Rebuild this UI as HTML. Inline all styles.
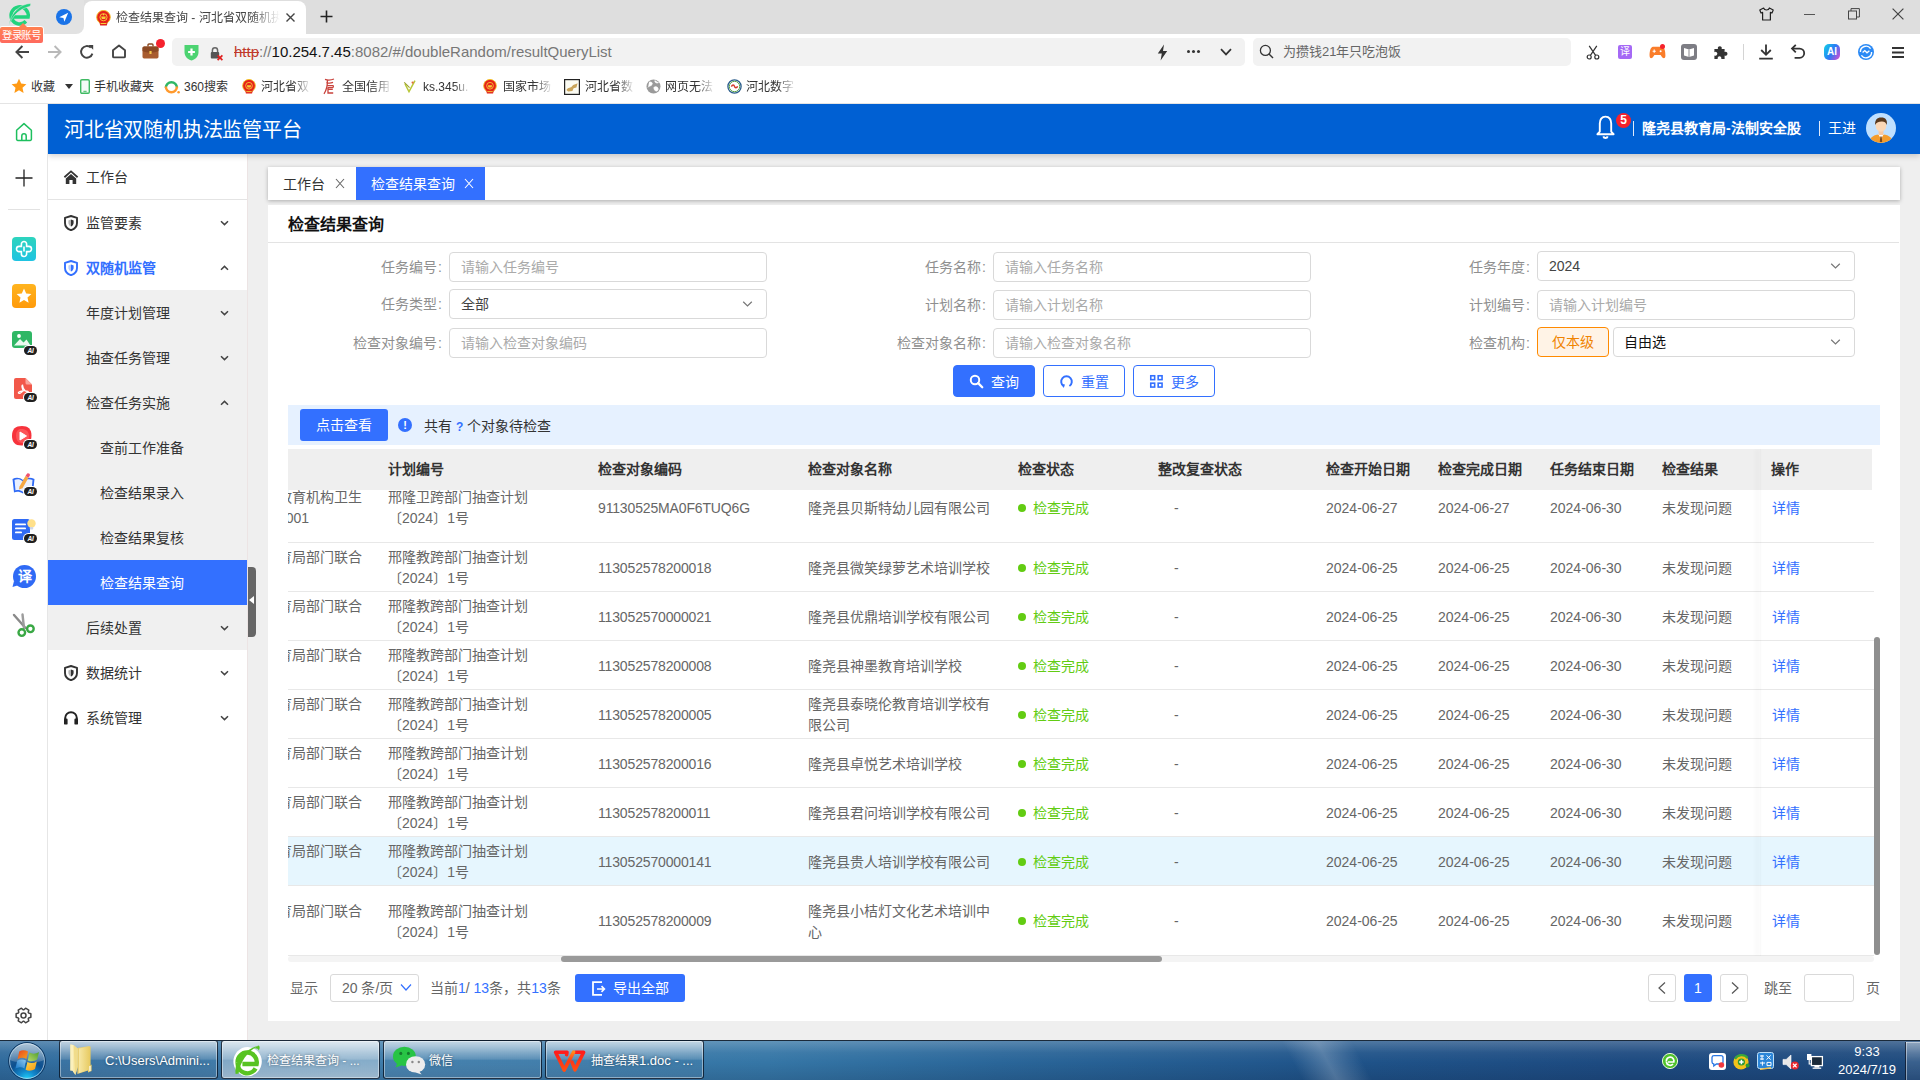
<!DOCTYPE html>
<html lang="zh-CN">
<head>
<meta charset="utf-8">
<title>检查结果查询</title>
<style>
*{box-sizing:border-box;margin:0;padding:0}
html,body{width:1920px;height:1080px;overflow:hidden;background:#fff}
body{font-family:"Liberation Sans",sans-serif;font-size:14px;color:#333;position:relative}
.abs{position:absolute}
svg{display:block}
/* ---------- browser chrome ---------- */
#tabbar{position:absolute;left:0;top:0;width:1920px;height:34px;background:#dedede}
#tabbar .pinned{position:absolute;left:0;top:0;width:84px;height:34px;background:#e2e2e2;border-bottom-right-radius:8px}
#tabbar .active{position:absolute;left:84px;top:1px;width:222px;height:33px;background:#fff;border-radius:8px 8px 0 0}
#tabbar .ttl{position:absolute;left:32px;top:8px;width:164px;height:18px;line-height:18px;font-size:12px;color:#444;white-space:nowrap;overflow:hidden;-webkit-mask-image:linear-gradient(90deg,#000 82%,transparent 100%)}
#login{position:absolute;left:-1px;top:26px;width:45px;height:18px;background:linear-gradient(180deg,#ff8150,#ff6a5e);border:1px solid #fff;border-radius:3px;color:#fff;font-size:10.5px;line-height:16px;text-align:center;z-index:5;letter-spacing:-0.3px;white-space:nowrap}
#login:before{content:"";position:absolute;left:19px;top:-4px;border:4px solid transparent;border-top:none;border-bottom:4px solid #ff8150}
#navbar{position:absolute;left:0;top:34px;width:1920px;height:35px;background:#fff}
#addr{position:absolute;left:172px;top:4px;width:1073px;height:28px;background:#f2f2f2;border-radius:5px}
#url{position:absolute;left:62px;top:4px;font-size:15px;line-height:20px;color:#777;white-space:nowrap}
#search{position:absolute;left:1253px;top:4px;width:318px;height:28px;background:#f2f2f2;border-radius:5px}
#search span{position:absolute;left:30px;top:5px;font-size:13px;line-height:18px;color:#666;white-space:nowrap}
#bm{position:absolute;left:0;top:69px;width:1920px;height:35px;background:#fff;border-bottom:1px solid #e4e4e4}
#bm .t{position:absolute;top:10px;font-size:12px;line-height:17px;color:#333;white-space:nowrap;overflow:hidden;height:17px}
#bm .f{-webkit-mask-image:linear-gradient(90deg,#000 66%,rgba(0,0,0,.12) 100%)}
#bm .i{position:absolute}
/* ---------- app frame ---------- */
#rail{position:absolute;left:0;top:104px;width:48px;height:936px;background:#fff;border-right:1px solid #e6e6e6}
#header{position:absolute;left:48px;top:104px;width:1872px;height:50px;background:#0060d3;z-index:3;box-shadow:0 2px 6px rgba(0,0,0,.18);clip-path:inset(0 0 -12px 0)}
#header h1{position:absolute;left:16px;top:12px;font-size:20px;line-height:28px;font-weight:normal;color:#fff;letter-spacing:-0.2px;white-space:nowrap}
#side{position:absolute;left:48px;top:154px;width:200px;height:886px;background:#fff;border-right:1px solid #ece4e4}
#content{position:absolute;left:248px;top:154px;width:1672px;height:886px;background:#efefef}
#taskbar{position:absolute;left:0;top:1040px;width:1920px;height:40px;background:linear-gradient(90deg,#2f6a9c 0%,#3f7dab 18%,#3576a6 40%,#2a6699 52%,#1f5389 70%,#1d4a80 85%,#1f4b7e 100%);border-top:1px solid #1b2a3a}

/* ---------- sidebar ---------- */
#side .it{position:absolute;left:0;width:199px;height:45px;line-height:47px;font-size:14px;color:#333;white-space:nowrap}
#side .it .ic{position:absolute;left:15px;top:15px;width:16px;height:16px}
#side .it .tx{position:absolute;left:38px;top:0}
#side .it .tx3{position:absolute;left:52px;top:0}
#side .it .cv{position:absolute;left:171px;top:19px;width:11px;height:8px}
#side .sub{position:absolute;left:0;top:136px;width:199px;height:360px;background:#f0f0f0}
#side .on{background:#3370ff;color:#fff !important}
#handle{position:absolute;left:248px;top:567px;width:8px;height:70px;background:#666;border-radius:0 4px 4px 0;z-index:4}
#handle:after{content:"";position:absolute;left:1px;top:29px;border:4px solid transparent;border-left:none;border-right:5px solid #fff}
/* ---------- rail ---------- */
#rail .ri{position:absolute;left:12px;width:24px;height:24px}
#rail .ai{position:absolute;width:13px;height:9px;border-radius:5px;background:#1f1f1f;color:#fff;font-size:6.5px;line-height:9px;text-align:center;font-weight:bold;font-style:italic;letter-spacing:-0.2px;box-shadow:0 0 0 1px #fff}

/* ---------- content ---------- */
#tabs{position:absolute;left:20px;top:13px;width:1632px;height:33px;background:#fff;box-shadow:0 1px 4px rgba(0,0,0,.28)}
#tabs .tb{position:absolute;top:0;height:33px;line-height:34px;font-size:14px;color:#333;white-space:nowrap}
#tabs .x{position:absolute;top:11px;width:10px;height:11px}
#main{position:absolute;left:20px;top:51px;width:1632px;height:816px;background:#fff}
#main h2{position:absolute;left:20px;top:9px;font-size:16px;line-height:22px;font-weight:bold;color:#111;white-space:nowrap}
#main .hr{position:absolute;left:0;top:37px;width:1631px;height:1px;background:#e3e3e3}
.lb{position:absolute;width:161px;letter-spacing:0;text-align:right;font-size:14px;line-height:30px;height:30px;color:#8f8f8f;white-space:nowrap}
.lb i{font-style:normal;margin-left:1.5px}
.in{position:absolute;width:318px;height:30px;border:1px solid #d9d9d9;border-radius:4px;background:#fff;font-size:14px;line-height:28px;padding-left:11px;color:#aaa;white-space:nowrap}
.in.v{color:#444}
.in svg{position:absolute;right:13px;top:10px}
.btn{position:absolute;top:160px;width:82px;height:32px;border-radius:4px;border:1px solid #3370ff;font-size:14px;line-height:33px;color:#3370ff;white-space:nowrap;background:#fff}
.btn.p{background:#3370ff;color:#fff}
.btn span{position:absolute;left:37px;top:0}
.btn svg{position:absolute;left:15px;top:8px;width:15px;height:15px}
#info{position:absolute;left:20px;top:200px;width:1592px;height:40px;background:#e6f1ff}
#info .b{position:absolute;left:12px;top:4px;width:88px;height:32px;border-radius:3px;background:#3370ff;color:#fff;font-size:14px;line-height:33px;text-align:center}
#info .d{position:absolute;left:110px;top:13px;width:14px;height:14px;border-radius:50%;background:#3370ff;color:#fff;font-size:11px;font-weight:bold;line-height:14px;text-align:center}
#info .m{position:absolute;left:136px;top:0;line-height:42px;font-size:14px;color:#333;white-space:nowrap}

/* ---------- table ---------- */
#tbl{position:absolute;left:20px;top:244px;width:1592px;height:515px;overflow:hidden}
#thead{position:absolute;left:0;top:0;width:1584px;height:41px;background:#efefef}
#thead div{position:absolute;top:0;line-height:41px;font-size:14px;font-weight:bold;color:#333;white-space:nowrap}
.tr{position:absolute;left:0;width:1586px;border-bottom:1px solid #e8e8e8;background:#fff}
.tr.hl{background:#e6f6fe}
.tr div{position:absolute;font-size:14px;line-height:21px;color:#666;white-space:nowrap;margin-top:1px}
.tr .st{color:#62cc12}
.tr .st:before{content:"";position:absolute;left:-15px;top:6px;width:8px;height:8px;border-radius:50%;background:#62cc12}
.tr .lk{color:#3370ff}
.fx{position:absolute;left:1472px;top:0;width:1px;height:507px;box-shadow:-3px 0 5px rgba(0,0,0,.12);background:rgba(0,0,0,.02)}
#vsb{position:absolute;left:1586px;top:41px;width:6px;height:470px}
#vsb i{position:absolute;left:0;top:147px;width:6px;height:318px;border-radius:3px;background:#8f8f8f}
#hsb{position:absolute;left:0;top:507px;width:1586px;height:6px;background:#f4f4f4;border-radius:3px}
#hsb i{position:absolute;left:273px;top:0;width:601px;height:6px;border-radius:3px;background:#9a9a9a}
/* ---------- pager ---------- */
#pg{position:absolute;left:0;top:769px;width:1631px;height:28px;font-size:14px;color:#666}
#pg .t{position:absolute;top:0;line-height:28px;white-space:nowrap}
#pg .bx{position:absolute;top:0;height:28px;border:1px solid #d9d9d9;border-radius:3px;background:#fff}
#pg b{font-weight:normal;color:#3370ff}

/* ---------- taskbar ---------- */
#taskbar .tbn{position:absolute;top:-1px;height:39px;border:1px solid rgba(8,22,40,.85);border-radius:3px;background:linear-gradient(180deg,rgba(255,255,255,.62) 0%,rgba(255,255,255,.34) 30%,rgba(255,255,255,.16) 49%,rgba(255,255,255,.04) 52%,rgba(255,255,255,.07) 100%);box-shadow:inset 0 0 0 1px rgba(255,255,255,.42)}
#taskbar .tbn.act{background:linear-gradient(180deg,rgba(255,255,255,.78) 0%,rgba(255,255,255,.58) 30%,rgba(255,255,255,.46) 49%,rgba(255,255,255,.36) 52%,rgba(255,255,255,.5) 100%)}
#taskbar .tbn span{position:absolute;top:11px;left:45px;font-size:12px;line-height:18px;color:#fff;white-space:nowrap;text-shadow:0 0 3px rgba(0,0,0,.45)}
#taskbar .ck{position:absolute;left:1822px;top:2px;width:90px;text-align:center;color:#fff;font-size:13px;line-height:18px;white-space:nowrap}
</style>
</head>
<body>
<!-- ======= BROWSER TAB BAR ======= -->
<div id="tabbar">
  <div class="abs" style="left:74px;top:24px;width:10px;height:10px;background:#fff"></div><div class="pinned"></div>
<!-- 360 logo -->
<svg class="abs" style="left:7px;top:2px" width="28" height="28" viewBox="0 0 28 28"><path d="M4.6 15 H21.1 A8.6 8.6 0 1 0 18.9 19.3" fill="none" stroke="#22d47e" stroke-width="3.5"/><path d="M23.6 1.4 C13.6 2.2 4 9.6 1.8 23.4 C5.6 13.2 13 6.6 22.4 4.6 C23.4 3.8 23.8 2.6 23.6 1.4 Z" fill="#22d47e" stroke="#e2e2e2" stroke-width=".5"/></svg>
<!-- blue plane -->
<svg class="abs" style="left:56px;top:9px" width="16" height="16" viewBox="0 0 16 16"><circle cx="8" cy="8" r="8" fill="#1a73e8"/><path d="M3.2 8.2 L12.2 3.8 L8.4 12.8 L7.4 9 Z" fill="#fff"/></svg>

  <div class="active">
<svg class="abs" style="left:12px;top:9px" width="15" height="16" viewBox="0 0 15 16"><circle cx="7.5" cy="7.2" r="6.8" fill="#e6211a" stroke="#f3c21c" stroke-width=".9"/><circle cx="7.5" cy="7.2" r="3.6" fill="none" stroke="#f7d038" stroke-width=".9"/><path d="M5.2 6.6 H9.8 L9.2 9 H5.8 Z" fill="#f7d038"/><circle cx="7.5" cy="4.6" r=".8" fill="#f7d038"/><path d="M3.4 12.2 H11.6 L10.8 15.4 H4.2 Z" fill="#e0241c"/><rect x="4.6" y="13" width="5.8" height="1" fill="#f7d038"/></svg>
<svg class="abs" style="left:201px;top:11px" width="11" height="11" viewBox="0 0 11 11"><path d="M1.5 1.5 L9.5 9.5 M9.5 1.5 L1.5 9.5" stroke="#444" stroke-width="1.4" fill="none"/></svg>
<div class="ttl">检查结果查询 - 河北省双随机执法</div></div>
</div>

<svg class="abs" style="z-index:2;left:320px;top:10px" width="13" height="13" viewBox="0 0 13 13"><path d="M6.5 0.5 V12.5 M0.5 6.5 H12.5" stroke="#222" stroke-width="1.6" fill="none"/></svg>
<svg class="abs" style="z-index:2;left:1759px;top:7px" width="15" height="14" viewBox="0 0 15 14"><path d="M4.6 1 L0.8 3 L2 6 L3.6 5.4 V13 H11.4 V5.4 L13 6 L14.2 3 L10.4 1 C10 2.4 9 3 7.5 3 C6 3 5 2.4 4.6 1 Z" fill="none" stroke="#222" stroke-width="1.2" stroke-linejoin="round"/></svg>
<div class="abs" style="z-index:2;left:1804px;top:14px;width:11px;height:1px;background:#555"></div>
<svg class="abs" style="z-index:2;left:1848px;top:8px" width="12" height="12" viewBox="0 0 12 12"><rect x="0.5" y="3" width="8" height="8" fill="none" stroke="#444" stroke-width="1"/><path d="M3 3 V0.6 H11.4 V9 H8.6" fill="none" stroke="#444" stroke-width="1"/></svg>
<svg class="abs" style="z-index:2;left:1892px;top:8px" width="12" height="12" viewBox="0 0 12 12"><path d="M0.6 0.6 L11.4 11.4 M11.4 0.6 L0.6 11.4" stroke="#444" stroke-width="1.2" fill="none"/></svg>
<div id="login">登录账号</div>
<!-- ======= NAV BAR ======= -->
<div id="navbar">
<svg class="abs" style="left:15px;top:11px" width="15" height="14" viewBox="0 0 15 14"><path d="M14 7 H2 M7.4 1 L1.4 7 L7.4 13" fill="none" stroke="#444" stroke-width="1.9"/></svg>
<svg class="abs" style="left:47px;top:11px" width="15" height="14" viewBox="0 0 15 14"><path d="M1 7 H13 M7.6 1 L13.6 7 L7.6 13" fill="none" stroke="#b9b9b9" stroke-width="1.9"/></svg>
<svg class="abs" style="left:79px;top:10px" width="16" height="16" viewBox="0 0 16 16"><path d="M13.4 9.6 A5.8 5.8 0 1 1 11.8 3.6" fill="none" stroke="#444" stroke-width="1.9"/><path d="M9.4 1 H14.2 V5.8 Z" fill="#444"/></svg>
<svg class="abs" style="left:111px;top:10px" width="16" height="15" viewBox="0 0 16 15"><path d="M2 6.2 L8 1.4 L14 6.2 V12.4 A1 1 0 0 1 13 13.4 H3 A1 1 0 0 1 2 12.4 Z" fill="none" stroke="#444" stroke-width="1.9" stroke-linejoin="round"/></svg>
<svg class="abs" style="left:142px;top:9px" width="17" height="16" viewBox="0 0 17 16"><path d="M6 3.6 V2 A1 1 0 0 1 7 1 H10 A1 1 0 0 1 11 2 V3.6" fill="none" stroke="#8a4a23" stroke-width="1.4"/><rect x="0.5" y="3.4" width="16" height="12" rx="1.6" fill="#a85c2f"/><path d="M0.5 5 A1.6 1.6 0 0 1 2.1 3.4 H14.9 A1.6 1.6 0 0 1 16.5 5 V8 C12 10 5 10 0.5 8 Z" fill="#8c4a24"/><rect x="7.4" y="8" width="2.2" height="3" rx=".4" fill="#f4c84a"/></svg>
<div class="abs" style="left:156px;top:5px;width:9px;height:9px;border-radius:50%;background:#f5222d"></div>

<svg class="abs" style="left:1586px;top:11px" width="14" height="15" viewBox="0 0 14 15"><path d="M3.2 0.8 L9.6 10.4 M10.8 0.8 L4.4 10.4" stroke="#333" stroke-width="1.2" fill="none"/><circle cx="3.2" cy="12" r="2" fill="none" stroke="#333" stroke-width="1.2"/><circle cx="10.8" cy="12" r="2" fill="none" stroke="#333" stroke-width="1.2"/></svg>
<div class="abs" style="left:1618px;top:11px;width:14px;height:14px;border-radius:2px;background:#a569f5;color:#fff;font-size:10px;line-height:14px;text-align:center">译</div>
<svg class="abs" style="left:1649px;top:12px" width="17" height="13" viewBox="0 0 17 13"><path d="M4 0.8 H13 C15.4 0.8 16.6 6 16.4 10 C16.2 13 14 12.8 12.6 10.6 L11.6 9 H5.4 L4.4 10.6 C3 12.8 0.8 13 0.6 10 C0.4 6 1.6 0.8 4 0.8 Z" fill="#fa7d2a"/><path d="M5.2 3.6 V6.8 M3.6 5.2 H6.8" stroke="#fff" stroke-width="1.1"/><circle cx="11.6" cy="5.2" r="1" fill="#fff"/></svg>
<div class="abs" style="left:1660px;top:10px;width:5px;height:5px;border-radius:50%;background:#f5222d"></div>
<svg class="abs" style="left:1681px;top:10px" width="16" height="16" viewBox="0 0 16 16"><rect width="16" height="16" rx="3" fill="#7d7d84"/><path d="M3 4 L8 5.6 L13 4 V11.4 L8 13 L3 11.4 Z" fill="#fff"/><path d="M8 5.6 V13" stroke="#7d7d84" stroke-width=".9"/></svg>
<svg class="abs" style="left:1713px;top:10px" width="16" height="16" viewBox="0 0 16 16"><path d="M1.4 5 H5 A2 2 0 1 1 8.6 5 H11.6 V8 A2 2 0 1 1 11.6 11.6 V15 H8.2 A1.9 1.9 0 1 0 4.8 15 H1.4 V11.4 A1.9 1.9 0 1 0 1.4 8.2 Z" fill="#333"/></svg>
<div class="abs" style="left:1743px;top:10px;width:1px;height:16px;background:#d4d4d4"></div>
<svg class="abs" style="left:1758px;top:10px" width="16" height="16" viewBox="0 0 16 16"><path d="M8 0.6 V10.4 M3.2 6 L8 10.8 L12.8 6 M1.2 14.6 H14.8" fill="none" stroke="#333" stroke-width="1.8"/></svg>
<svg class="abs" style="left:1790px;top:10px" width="16" height="16" viewBox="0 0 16 16"><path d="M2.4 4.6 H9.6 A4.6 4.6 0 0 1 9.6 13.8 H4.6" fill="none" stroke="#333" stroke-width="1.8"/><path d="M5.8 0.8 L2 4.6 L5.8 8.4" fill="none" stroke="#333" stroke-width="1.8"/></svg>
<div class="abs" style="left:1824px;top:10px;width:16px;height:16px;border-radius:5px;background:linear-gradient(120deg,#12d6e6 0%,#2a7af5 50%,#e34ad0 100%);color:#fff;font-size:10px;font-weight:bold;line-height:16px;text-align:center">AI</div>
<svg class="abs" style="left:1858px;top:10px" width="16" height="16" viewBox="0 0 16 16"><circle cx="8" cy="8" r="8" fill="#2b8af5"/><path d="M2.4 8 A5.6 5.6 0 0 1 12.6 4.6" fill="none" stroke="#fff" stroke-width="1.4"/><path d="M13.6 8 A5.6 5.6 0 0 1 3.4 11.4" fill="none" stroke="#fff" stroke-width="1.4"/><path d="M4.6 8.6 L6.8 6.6 L9 8.8 L11.4 6.8" fill="none" stroke="#fff" stroke-width="1.3"/></svg>
<div class="abs" style="left:1892px;top:13px;width:12px;height:2px;background:#333;box-shadow:0 4.5px 0 #333,0 9px 0 #333"></div>

  <div id="addr">
<svg class="abs" style="left:12px;top:6px" width="15" height="17" viewBox="0 0 15 17"><path d="M0.5 1 H14.5 V8 C14.5 12.4 11.6 15.2 7.5 16.6 C3.4 15.2 0.5 12.4 0.5 8 Z" fill="#4cd371"/><path d="M7.5 4.6 V11.4 M4.1 8 H10.9" stroke="#fff" stroke-width="2.2"/></svg>
<svg class="abs" style="left:38px;top:8px" width="14" height="15" viewBox="0 0 14 15"><path d="M2.4 6.4 V4.4 A2.6 2.6 0 0 1 7.6 4.4 V6.4" fill="none" stroke="#666" stroke-width="1.5"/><rect x="0.8" y="6" width="8.4" height="6.6" rx="1" fill="#555"/><path d="M7.6 9.4 L12.4 14.2 M12.4 9.4 L7.6 14.2" stroke="#e02020" stroke-width="1.7"/></svg>
<svg class="abs" style="left:985px;top:6px" width="11" height="17" viewBox="0 0 11 17"><path d="M7 0.5 L0.8 9.6 H4.8 L3.6 16.5 L10.2 7 H6 Z" fill="#333"/></svg>
<div class="abs" style="left:1015px;top:12px;width:3px;height:3px;border-radius:50%;background:#333;box-shadow:5px 0 0 #333,10px 0 0 #333"></div>
<svg class="abs" style="left:1048px;top:10px" width="12" height="8" viewBox="0 0 12 8"><path d="M1 1.2 L6 6.4 L11 1.2" fill="none" stroke="#333" stroke-width="1.7"/></svg>
<div id="url"><span style="color:#c0392b;text-decoration:line-through">http</span>://<span style="color:#111">10.254.7.45</span>:8082/#/doubleRandom/resultQueryList</div></div>
  <div id="search"><svg class="abs" style="left:6px;top:6px" width="15" height="15" viewBox="0 0 15 15"><circle cx="6.4" cy="6.4" r="5" fill="none" stroke="#333" stroke-width="1.3"/><path d="M10 10 L14 14" stroke="#333" stroke-width="1.5"/></svg><span>为攒钱21年只吃泡饭</span></div>
</div>
<!-- ======= BOOKMARK BAR ======= -->
<div id="bm">
<svg class="i" style="left:11px;top:9px" width="16" height="16" viewBox="0 0 16 16"><path d="M8 0.8 L10.2 5.6 L15.4 6.2 L11.5 9.7 L12.6 14.9 L8 12.3 L3.4 14.9 L4.5 9.7 L0.6 6.2 L5.8 5.6 Z" fill="#ff9a16"/></svg>
<div class="t" style="left:31px">收藏</div>
<div class="i" style="left:65px;top:15px;border:4px solid transparent;border-top:5px solid #333;border-bottom:none"></div>
<svg class="i" style="left:80px;top:10px" width="10" height="15" viewBox="0 0 10 15"><rect x="0.7" y="0.7" width="8.6" height="13.6" rx="1.2" fill="#f4fbf6" stroke="#3fba63" stroke-width="1.4"/><rect x="3.4" y="11.8" width="3.2" height="1" fill="#3fba63"/></svg>
<div class="t" style="left:94px">手机收藏夹</div>
<svg class="i" style="left:164px;top:10px" width="17" height="16" viewBox="0 0 17 16"><path d="M1.8 8.8 A5.6 5.6 0 0 1 13 8.8" fill="none" stroke="#2fb765" stroke-width="2.4"/><path d="M13 7.6 A5.6 5.6 0 0 1 1.8 7.6" fill="none" stroke="#ff9a2e" stroke-width="2.4"/><circle cx="14.6" cy="13.2" r="1.3" fill="#ff9a2e"/></svg>
<div class="t" style="left:184px">360搜索</div>
<svg class="i" style="left:242px;top:10px" width="14" height="15" viewBox="0 0 15 16"><circle cx="7.5" cy="7.2" r="6.8" fill="#e6211a" stroke="#f3c21c" stroke-width=".9"/><circle cx="7.5" cy="7.2" r="3.6" fill="none" stroke="#f7d038" stroke-width=".9"/><path d="M5.2 6.6 H9.8 L9.2 9 H5.8 Z" fill="#f7d038"/><path d="M3.4 12.2 H11.6 L10.8 15.4 H4.2 Z" fill="#e0241c"/><rect x="4.6" y="13" width="5.8" height="1" fill="#f7d038"/></svg>
<div class="t f" style="left:261px;width:48px">河北省双</div>
<svg class="i" style="left:323px;top:9px" width="13" height="17" viewBox="0 0 13 17"><path d="M2 1.4 C5 2.4 8 2.2 11 1 M3.4 4.6 C5.6 5.4 8 5.2 10 4.4 M4.4 1.8 C4.6 7 3.6 12 1 15.8 M4.4 7.6 H10 C10.6 7.6 10.4 9.4 9.8 9.6 H5 M4.6 11.4 H9.8 M5 9.6 V15 H10.2" fill="none" stroke="#c9423c" stroke-width="1.3"/></svg>
<div class="t f" style="left:342px;width:48px">全国信用</div>
<svg class="i" style="left:403px;top:10px" width="14" height="15" viewBox="0 0 14 15"><path d="M2 5 L6 12.6 L12 1.6" fill="none" stroke="#b9c83a" stroke-width="1.5"/><path d="M1.2 3.4 L6.6 8.6" fill="none" stroke="#9aa02a" stroke-width="1.1"/><circle cx="9.6" cy="3.6" r="1.1" fill="#e06a3a"/></svg>
<div class="t f" style="left:423px;width:46px">ks.345u.</div>
<svg class="i" style="left:483px;top:10px" width="14" height="15" viewBox="0 0 15 16"><circle cx="7.5" cy="7.2" r="6.8" fill="#e6211a" stroke="#f3c21c" stroke-width=".9"/><circle cx="7.5" cy="7.2" r="3.6" fill="none" stroke="#f7d038" stroke-width=".9"/><path d="M5.2 6.6 H9.8 L9.2 9 H5.8 Z" fill="#f7d038"/><path d="M3.4 12.2 H11.6 L10.8 15.4 H4.2 Z" fill="#e0241c"/><rect x="4.6" y="13" width="5.8" height="1" fill="#f7d038"/></svg>
<div class="t f" style="left:503px;width:48px">国家市场</div>
<svg class="i" style="left:564px;top:10px" width="16" height="16" viewBox="0 0 16 16"><rect x="0.6" y="0.6" width="14.8" height="14.8" fill="#fbfbf2" stroke="#222" stroke-width="1.2"/><path d="M2.4 11 C4.6 7.4 6.6 9.6 8 7.2 C9.4 5 11.4 5.6 13.6 4.2 L12.4 8.4 L9.6 9.2 L8.4 12 L4.2 12.6 Z" fill="#c9a45a"/></svg>
<div class="t f" style="left:585px;width:48px">河北省数</div>
<svg class="i" style="left:646px;top:10px" width="15" height="15" viewBox="0 0 15 15"><circle cx="7.5" cy="7.5" r="7" fill="#9a9a9a"/><path d="M3 3.4 C5 2.4 7 3.8 6 5.6 C5 7.4 2.6 6.6 2 8.4 M9 1.4 C8.4 3.4 10.4 4.6 12.6 3.6 M8.4 8 C10.4 7.2 12.6 8.4 12 10.6 C11.4 12.6 9.4 12.4 8.6 11 C8 9.8 7.6 8.6 8.4 8 Z" fill="#fff" stroke="#fff" stroke-width=".8"/></svg>
<div class="t f" style="left:665px;width:48px">网页无法</div>
<svg class="i" style="left:727px;top:10px" width="15" height="15" viewBox="0 0 15 15"><circle cx="7.5" cy="7.5" r="6.6" fill="#fff" stroke="#2a5d8c" stroke-width="1.3"/><circle cx="7.5" cy="7.5" r="5.2" fill="none" stroke="#5aa14a" stroke-width="1"/><path d="M4.4 7.6 C5.4 5.4 7 5.6 7.5 7.4 C8 9.2 9.8 9.2 10.6 7.2" fill="none" stroke="#d23a2a" stroke-width="1.5"/></svg>
<div class="t f" style="left:746px;width:48px">河北数字</div>
</div>
<!-- ======= APP ======= -->
<div id="rail">
<svg class="abs" style="left:15px;top:18px" width="18" height="20" viewBox="0 0 18 20"><path d="M9 1.6 L1.6 8.2 V17.2 A1.2 1.2 0 0 0 2.8 18.4 H15.2 A1.2 1.2 0 0 0 16.4 17.2 V8.2 Z" fill="none" stroke="#1dbf5e" stroke-width="1.5" stroke-linejoin="round"/><path d="M6.8 18 V14 A2.2 2.2 0 0 1 11.2 14 V18" fill="none" stroke="#1dbf5e" stroke-width="1.5"/></svg>
<svg class="abs" style="left:15px;top:65px" width="18" height="18" viewBox="0 0 18 18"><path d="M9 0.5 V17.5 M0.5 9 H17.5" stroke="#222" stroke-width="1.3" fill="none"/></svg>
<div class="abs" style="left:8px;top:105px;width:32px;height:1px;background:#e2e2e2"></div>
<!-- teal -->
<div class="abs" style="left:12px;top:133px;width:24px;height:24px;border-radius:4px;background:linear-gradient(180deg,#2dd4bd,#1fc3e2)"><svg width="24" height="24" viewBox="0 0 24 24"><path d="M12 4.5 A2.6 2.6 0 0 1 14.6 7.1 V9.4 H16.9 A2.6 2.6 0 0 1 16.9 14.6 H14.6 V16.9 A2.6 2.6 0 0 1 9.4 16.9 V14.6 H7.1 A2.6 2.6 0 0 1 7.1 9.4 H9.4 V7.1 A2.6 2.6 0 0 1 12 4.5 Z" fill="none" stroke="#fff" stroke-width="1.6"/><path d="M12 9.4 V14.6" stroke="#fff" stroke-width="1.6"/></svg></div>
<!-- star -->
<div class="abs" style="left:12px;top:180px;width:24px;height:24px;border-radius:4px;background:linear-gradient(180deg,#ffb41f,#ff9a0a)"><svg width="24" height="24" viewBox="0 0 24 24"><path d="M12 4.6 L14.2 9.4 L19.4 10 L15.5 13.5 L16.6 18.7 L12 16.1 L7.4 18.7 L8.5 13.5 L4.6 10 L9.8 9.4 Z" fill="#fff"/></svg></div>
<!-- image -->
<svg class="abs" style="left:12px;top:227px" width="20" height="18" viewBox="0 0 20 18"><rect x="0" y="0" width="20" height="17" rx="3" fill="#2fb765"/><circle cx="7" cy="5" r="1.9" fill="#fff"/><path d="M2 14.5 L8 8 L11.5 11.5 L14.5 8.5 L18.5 14.5 Z" fill="#eafaf0"/></svg>
<div class="ai" style="left:24px;top:242px">AI</div>
<!-- pdf -->
<svg class="abs" style="left:14px;top:274px" width="18" height="21" viewBox="0 0 18 21"><path d="M2 0 H11.5 L18 6.5 V19 A2 2 0 0 1 16 21 H2 A2 2 0 0 1 0 19 V2 A2 2 0 0 1 2 0 Z" fill="#f2584a"/><path d="M11.5 0 L18 6.5 H13 A1.5 1.5 0 0 1 11.5 5 Z" fill="#f9a59c"/><path d="M8.6 7.2 C7.2 7.2 8.4 11 9.2 12.4 C8 14.4 5 16.2 4.4 15 C3.8 13.6 9.4 12.2 13.2 13 C14.8 13.4 14.6 14.8 13.2 14.4 C11.6 14 9 10.6 8.6 7.2 Z" fill="none" stroke="#fff" stroke-width="1.2"/></svg>
<div class="ai" style="left:24px;top:289px">AI</div>
<!-- video -->
<svg class="abs" style="left:11px;top:321px" width="22" height="22" viewBox="0 0 22 22"><path d="M11 1 C17 1 20.5 4 20.5 10.5 C20.5 17.5 17 20.5 10.5 20.5 C4 20.5 1 17.5 1 10.8 C1 4 4.5 1 11 1 Z" fill="#f7333c"/><path d="M9 4 C14 3.5 18 6 18 11 C18 15.5 15 18 11 18 C7 18 5 15 5 10.5 C5 7 6.5 4.5 9 4 Z" fill="#ff6b6b" opacity=".6"/><path d="M9 7 L15.5 11 L9 15 Z" fill="#fff" stroke="#fff" stroke-width="1" stroke-linejoin="round"/></svg>
<div class="ai" style="left:24px;top:336px">AI</div>
<!-- book pencil -->
<svg class="abs" style="left:11px;top:369px" width="25" height="22" viewBox="0 0 25 22"><path d="M1.5 6 C5 4 9 4.5 12 7 C15 4.5 19.5 4 23.5 6 L22 19.5 C18.5 18 15 18.5 12 20.5 C9 18.5 5.5 18 3 19.5 Z" fill="#2f6af5"/><path d="M3.5 7 C6 5.8 9 6 12 8.4 C15 6 18.5 5.8 21.5 7 L20.5 17.5 C17.5 16.6 14.5 17 12 18.8 C9.5 17 6.5 16.6 4.5 17.5 Z" fill="#e8efff"/><path d="M8.5 13.5 L14.5 3 L17.5 4.8 L11.5 15.2 L8 16.5 Z" fill="#f5a742"/><path d="M14.5 3 L15.6 1.2 A1.7 1.7 0 0 1 18.6 3 L17.5 4.8 Z" fill="#f0506e"/></svg>
<div class="ai" style="left:24px;top:383px">AI</div>
<!-- doc bulb -->
<svg class="abs" style="left:12px;top:414px" width="25" height="23" viewBox="0 0 25 23"><rect x="0" y="1" width="18" height="21" rx="2.5" fill="#2f6af5"/><rect x="3" y="5.5" width="11" height="1.8" rx=".9" fill="#fff"/><rect x="3" y="9.5" width="11" height="1.8" rx=".9" fill="#fff"/><rect x="3" y="13.5" width="7" height="1.8" rx=".9" fill="#fff"/><circle cx="19.5" cy="5.5" r="4.2" fill="#ffe08a"/><rect x="17.8" y="9" width="3.4" height="2.6" rx=".8" fill="#cfd6e6"/></svg>
<div class="ai" style="left:24px;top:430px">AI</div>
<!-- yi -->
<svg class="abs" style="left:11px;top:460px" width="26" height="26" viewBox="0 0 26 26"><circle cx="13.5" cy="12.5" r="11.5" fill="#2f6af5"/><path d="M3 17 L1.5 23 L8 21 Z" fill="#2f6af5"/></svg>
<div class="abs" style="left:16px;top:464px;width:17px;height:17px;line-height:17px;font-size:14px;font-weight:bold;color:#fff;text-align:center">译</div>
<!-- scissors -->
<svg class="abs" style="left:12px;top:509px" width="24" height="25" viewBox="0 0 24 25"><path d="M2 2 L13.5 15" stroke="#8a8a8a" stroke-width="2.4" stroke-linecap="round"/><path d="M10.5 1.5 L12 15" stroke="#9c9c9c" stroke-width="2.4" stroke-linecap="round"/><circle cx="9.8" cy="19.6" r="3.3" fill="none" stroke="#3aa845" stroke-width="2.4"/><circle cx="18.4" cy="15.8" r="3.3" fill="none" stroke="#3aa845" stroke-width="2.4"/></svg>
<!-- gear -->
<svg class="abs" style="left:15px;top:903px" width="17" height="17" viewBox="0 0 17 17"><path d="M13.62 6.00 L15.87 6.66 L15.87 10.34 L13.62 11.00 L13.23 11.69 L13.78 13.97 L10.59 15.81 L8.90 14.19 L8.10 14.19 L6.41 15.81 L3.22 13.97 L3.77 11.69 L3.38 11.00 L1.13 10.34 L1.13 6.66 L3.38 6.00 L3.77 5.31 L3.22 3.03 L6.41 1.19 L8.10 2.81 L8.90 2.81 L10.59 1.19 L13.78 3.03 L13.23 5.31 Z" fill="none" stroke="#444" stroke-width="1.5" stroke-linejoin="round"/><circle cx="8.5" cy="8.5" r="2.5" fill="none" stroke="#444" stroke-width="1.5"/></svg>
</div>
<div id="header"><h1>河北省双随机执法监管平台</h1>
<svg class="abs" style="left:1548px;top:11px" width="19" height="26" viewBox="0 0 19 26"><path d="M9.5 1.6 C5.6 1.6 3.8 4.8 3.8 8.6 V16.6 L1.4 19.2 H17.6 L15.2 16.6 V8.6 C15.2 4.8 13.4 1.6 9.5 1.6 Z" fill="none" stroke="#fff" stroke-width="1.9" stroke-linejoin="round"/><path d="M7.3 21.4 A2.3 2.3 0 0 0 11.7 21.4" fill="none" stroke="#fff" stroke-width="1.9"/></svg>
<div class="abs" style="left:1568px;top:9px;width:15px;height:15px;border-radius:50%;background:#f5222d;color:#fff;font-size:12px;font-weight:bold;line-height:15px;text-align:center">5</div>
<div class="abs" style="left:1585px;top:17px;width:1px;height:15px;background:#dfe9fa"></div>
<div class="abs" style="left:1594px;top:13px;font-size:14px;line-height:22px;color:#fff;font-weight:bold;white-space:nowrap;letter-spacing:0">隆尧县教育局-法制安全股</div>
<div class="abs" style="left:1771px;top:17px;width:1px;height:15px;background:#dfe9fa"></div>
<div class="abs" style="left:1780px;top:13px;font-size:14px;line-height:22px;color:#fff;white-space:nowrap">王进</div>
<svg class="abs" style="left:1818px;top:9px" width="30" height="30" viewBox="0 0 30 30"><defs><clipPath id="avc"><circle cx="15" cy="15" r="15"/></clipPath></defs><circle cx="15" cy="15" r="15" fill="#bfe0ff"/><g clip-path="url(#avc)"><path d="M3 30 C4 23 9 21.5 15 21.5 C21 21.5 26 23 27 30 Z" fill="#f39c2d"/><path d="M12.2 21 L15 26 L17.8 21 Z" fill="#fff"/><path d="M14.3 23.5 H15.7 L16.2 29 H13.8 Z" fill="#7a4a21"/><rect x="12.6" y="17" width="4.8" height="5" fill="#f7c9a3"/><ellipse cx="15" cy="12.6" rx="5.4" ry="6.2" fill="#fbd7b5"/><path d="M9.2 12 C8.6 6.5 11.5 4.2 15.4 4.4 C19.6 4.4 21.6 7 20.8 12 C20 9.6 18 8.4 15.6 8.6 C13 8.6 10.4 9.4 9.2 12 Z" fill="#5a3a1e"/></g></svg>
</div>
<div id="side">
<div class="sub"></div>
<div class="abs" style="left:0;top:45px;width:199px;height:1px;background:#e4e4e4"></div>
<div class="it" style="top:0px"><svg class="ic" viewBox="0 0 16 16"><path d="M8 1.2 L0.8 7.6 L2 8.9 L8 3.6 L14 8.9 L15.2 7.6 Z" fill="#333"/><path d="M8 5 L2.8 9.6 V15 H6.4 V11 H9.6 V15 H13.2 V9.6 Z" fill="#333"/></svg><span class="tx">工作台</span></div>
<div class="it" style="top:46px"><svg class="ic" viewBox="0 0 16 16"><path d="M8 1 L14 2.8 V8 C14 11.5 11.5 14 8 15.2 C4.5 14 2 11.5 2 8 V2.8 Z" fill="none" stroke="#333" stroke-width="1.9" stroke-linejoin="round"/><path d="M8 4.5 L10.6 5.4 V8 C10.6 9.6 9.5 10.8 8 11.5 Z" fill="#333"/><path d="M8 4.5 L5.4 5.4 V8 C5.4 9.6 6.5 10.8 8 11.5 Z" fill="#333" opacity=".35"/></svg><span class="tx">监管要素</span><svg class="cv" viewBox="0 0 11 8"><path d="M2 2.2 L5.5 5.6 L9 2.2" fill="none" stroke="#444" stroke-width="1.5"/></svg></div>
<div class="it" style="top:91px"><svg class="ic" viewBox="0 0 16 16"><path d="M8 1 L14 2.8 V8 C14 11.5 11.5 14 8 15.2 C4.5 14 2 11.5 2 8 V2.8 Z" fill="none" stroke="#3370ff" stroke-width="1.9" stroke-linejoin="round"/><path d="M8 4.5 L10.6 5.4 V8 C10.6 9.6 9.5 10.8 8 11.5 Z" fill="#3370ff"/><path d="M8 4.5 L5.4 5.4 V8 C5.4 9.6 6.5 10.8 8 11.5 Z" fill="#3370ff" opacity=".35"/></svg><span class="tx"><b style="color:#3370ff">双随机监管</b></span><svg class="cv" viewBox="0 0 11 8"><path d="M2 5.8 L5.5 2.4 L9 5.8" fill="none" stroke="#444" stroke-width="1.5"/></svg></div>
<div class="it" style="top:136px"><span class="tx">年度计划管理</span><svg class="cv" viewBox="0 0 11 8"><path d="M2 2.2 L5.5 5.6 L9 2.2" fill="none" stroke="#444" stroke-width="1.5"/></svg></div>
<div class="it" style="top:181px"><span class="tx">抽查任务管理</span><svg class="cv" viewBox="0 0 11 8"><path d="M2 2.2 L5.5 5.6 L9 2.2" fill="none" stroke="#444" stroke-width="1.5"/></svg></div>
<div class="it" style="top:226px"><span class="tx">检查任务实施</span><svg class="cv" viewBox="0 0 11 8"><path d="M2 5.8 L5.5 2.4 L9 5.8" fill="none" stroke="#444" stroke-width="1.5"/></svg></div>
<div class="it" style="top:271px"><span class="tx3">查前工作准备</span></div>
<div class="it" style="top:316px"><span class="tx3">检查结果录入</span></div>
<div class="it" style="top:361px"><span class="tx3">检查结果复核</span></div>
<div class="it on" style="top:406px"><span class="tx3">检查结果查询</span></div>
<div class="it" style="top:451px"><span class="tx">后续处置</span><svg class="cv" viewBox="0 0 11 8"><path d="M2 2.2 L5.5 5.6 L9 2.2" fill="none" stroke="#444" stroke-width="1.5"/></svg></div>
<div class="it" style="top:496px"><svg class="ic" viewBox="0 0 16 16"><path d="M8 1 L14 2.8 V8 C14 11.5 11.5 14 8 15.2 C4.5 14 2 11.5 2 8 V2.8 Z" fill="none" stroke="#333" stroke-width="1.9" stroke-linejoin="round"/><path d="M8 4.5 L10.6 5.4 V8 C10.6 9.6 9.5 10.8 8 11.5 Z" fill="#333"/><path d="M8 4.5 L5.4 5.4 V8 C5.4 9.6 6.5 10.8 8 11.5 Z" fill="#333" opacity=".35"/></svg><span class="tx">数据统计</span><svg class="cv" viewBox="0 0 11 8"><path d="M2 2.2 L5.5 5.6 L9 2.2" fill="none" stroke="#444" stroke-width="1.5"/></svg></div>
<div class="it" style="top:541px"><svg class="ic" viewBox="0 0 16 16"><path d="M2.2 10 V8 A5.8 5.8 0 0 1 13.8 8 V10" fill="none" stroke="#222" stroke-width="2"/><rect x="1" y="8.6" width="3.6" height="6" rx="1.2" fill="#222"/><rect x="11.4" y="8.6" width="3.6" height="6" rx="1.2" fill="#222"/></svg><span class="tx">系统管理</span><svg class="cv" viewBox="0 0 11 8"><path d="M2 2.2 L5.5 5.6 L9 2.2" fill="none" stroke="#444" stroke-width="1.5"/></svg></div>
</div>
<div id="handle"></div>
<div id="content">
<div id="tabs">
  <div class="tb" style="left:15px">工作台</div><svg class="x" style="left:67px" viewBox="0 0 10 11"><path d="M1 1 L9 10 M9 1 L1 10" stroke="#666" stroke-width="1.1" fill="none"/></svg>
  <div class="abs" style="left:88px;top:0;width:129px;height:33px;background:#3370ff"></div>
  <div class="tb" style="left:103px;color:#fff">检查结果查询</div><svg class="x" style="left:196px" viewBox="0 0 10 11"><path d="M1 1 L9 10 M9 1 L1 10" stroke="#fff" stroke-width="1.1" fill="none"/></svg>
</div>
<div id="main">
  <h2>检查结果查询</h2>
  <div class="hr"></div>
  <!-- row1 -->
  <div class="lb" style="left:13px;top:47px">任务编号<i>:</i></div><div class="in" style="left:181px;top:47px">请输入任务编号</div>
  <div class="lb" style="left:557px;top:47px">任务名称<i>:</i></div><div class="in" style="left:725px;top:47px">请输入任务名称</div>
  <div class="lb" style="left:1101px;top:47px">任务年度<i>:</i></div><div class="in v" style="left:1269px;top:46px">2024<svg width="11" height="8" viewBox="0 0 11 8"><path d="M1.2 1.8 L5.5 6 L9.8 1.8" fill="none" stroke="#777" stroke-width="1.2"/></svg></div>
  <!-- row2 -->
  <div class="lb" style="left:13px;top:84px">任务类型<i>:</i></div><div class="in v" style="left:181px;top:84px">全部<svg width="11" height="8" viewBox="0 0 11 8"><path d="M1.2 1.8 L5.5 6 L9.8 1.8" fill="none" stroke="#777" stroke-width="1.2"/></svg></div>
  <div class="lb" style="left:557px;top:85px">计划名称<i>:</i></div><div class="in" style="left:725px;top:85px">请输入计划名称</div>
  <div class="lb" style="left:1101px;top:85px">计划编号<i>:</i></div><div class="in" style="left:1269px;top:85px">请输入计划编号</div>
  <!-- row3 -->
  <div class="lb" style="left:13px;top:123px">检查对象编号<i>:</i></div><div class="in" style="left:181px;top:123px">请输入检查对象编码</div>
  <div class="lb" style="left:557px;top:123px">检查对象名称<i>:</i></div><div class="in" style="left:725px;top:123px">请输入检查对象名称</div>
  <div class="lb" style="left:1101px;top:123px">检查机构<i>:</i></div>
  <div class="in" style="left:1269px;top:122px;width:72px;border-color:#ff8a00;background:#fff3e6;color:#f08300;padding-left:0;text-align:center">仅本级</div>
  <div class="in v" style="left:1345px;top:122px;width:242px;color:#111;padding-left:10px">自由选<svg width="11" height="8" viewBox="0 0 11 8"><path d="M1.2 1.8 L5.5 6 L9.8 1.8" fill="none" stroke="#777" stroke-width="1.2"/></svg></div>
  <!-- buttons -->
  <div class="btn p" style="left:685px"><svg width="17" height="17" viewBox="0 0 17 17"><circle cx="6.8" cy="6.8" r="4.8" fill="none" stroke="#fff" stroke-width="2.2"/><path d="M10.4 10.4 L15 15" stroke="#fff" stroke-width="2.6" stroke-linecap="round"/></svg><span>查询</span></div>
  <div class="btn" style="left:775px"><svg width="17" height="17" viewBox="0 0 17 17"><path d="M5.2 13.6 A6 6 0 1 1 11.8 13.6" fill="none" stroke="#3370ff" stroke-width="2.2"/><path d="M2.6 11.2 L6.8 12 L5.4 16 Z" fill="#3370ff"/></svg><span>重置</span></div>
  <div class="btn" style="left:865px"><svg width="17" height="17" viewBox="0 0 17 17"><g fill="none" stroke="#3370ff" stroke-width="1.8"><rect x="2" y="2" width="4.4" height="4.4"/><rect x="10.4" y="2" width="4.4" height="4.4"/><rect x="2" y="10.4" width="4.4" height="4.4"/><rect x="10.4" y="10.4" width="4.4" height="4.4"/></g></svg><span>更多</span></div>
  <!-- info -->
  <div id="info"><div class="b">点击查看</div><div class="d">!</div><div class="m">共有 <b style="color:#3370ff;font-size:12px">?</b> 个对象待检查</div></div>
  <div id="tbl">
<div class="tr" style="top:41px;height:53px"><div style="left:-10px;top:-4px">教育机构卫生<br>2001</div><div style="left:100px;top:-4px">邢隆卫跨部门抽查计划<br>〔2024〕1号</div><div style="left:310px;top:7px;letter-spacing:-0.15px">91130525MA0F6TUQ6G</div><div style="left:520px;top:7px">隆尧县贝斯特幼儿园有限公司</div><div class="st" style="left:745px;top:7px">检查完成</div><div style="left:886px;top:7px">-</div><div style="left:1038px;top:7px">2024-06-27</div><div style="left:1150px;top:7px">2024-06-27</div><div style="left:1262px;top:7px">2024-06-30</div><div style="left:1374px;top:7px">未发现问题</div><div class="lk" style="left:1484px;top:7px">详情</div></div>
<div class="tr" style="top:94px;height:49px"><div style="left:-10px;top:3px">育局部门联合</div><div style="left:100px;top:3px">邢隆教跨部门抽查计划<br>〔2024〕1号</div><div style="left:310px;top:14px;letter-spacing:-0.15px">113052578200018</div><div style="left:520px;top:14px">隆尧县微笑绿萝艺术培训学校</div><div class="st" style="left:745px;top:14px">检查完成</div><div style="left:886px;top:14px">-</div><div style="left:1038px;top:14px">2024-06-25</div><div style="left:1150px;top:14px">2024-06-25</div><div style="left:1262px;top:14px">2024-06-30</div><div style="left:1374px;top:14px">未发现问题</div><div class="lk" style="left:1484px;top:14px">详情</div></div>
<div class="tr" style="top:143px;height:49px"><div style="left:-10px;top:3px">育局部门联合</div><div style="left:100px;top:3px">邢隆教跨部门抽查计划<br>〔2024〕1号</div><div style="left:310px;top:14px;letter-spacing:-0.15px">113052570000021</div><div style="left:520px;top:14px">隆尧县优鼎培训学校有限公司</div><div class="st" style="left:745px;top:14px">检查完成</div><div style="left:886px;top:14px">-</div><div style="left:1038px;top:14px">2024-06-25</div><div style="left:1150px;top:14px">2024-06-25</div><div style="left:1262px;top:14px">2024-06-30</div><div style="left:1374px;top:14px">未发现问题</div><div class="lk" style="left:1484px;top:14px">详情</div></div>
<div class="tr" style="top:192px;height:49px"><div style="left:-10px;top:3px">育局部门联合</div><div style="left:100px;top:3px">邢隆教跨部门抽查计划<br>〔2024〕1号</div><div style="left:310px;top:14px;letter-spacing:-0.15px">113052578200008</div><div style="left:520px;top:14px">隆尧县神墨教育培训学校</div><div class="st" style="left:745px;top:14px">检查完成</div><div style="left:886px;top:14px">-</div><div style="left:1038px;top:14px">2024-06-25</div><div style="left:1150px;top:14px">2024-06-25</div><div style="left:1262px;top:14px">2024-06-30</div><div style="left:1374px;top:14px">未发现问题</div><div class="lk" style="left:1484px;top:14px">详情</div></div>
<div class="tr" style="top:241px;height:49px"><div style="left:-10px;top:3px">育局部门联合</div><div style="left:100px;top:3px">邢隆教跨部门抽查计划<br>〔2024〕1号</div><div style="left:310px;top:14px;letter-spacing:-0.15px">113052578200005</div><div style="left:520px;top:3px">隆尧县泰晓伦教育培训学校有<br>限公司</div><div class="st" style="left:745px;top:14px">检查完成</div><div style="left:886px;top:14px">-</div><div style="left:1038px;top:14px">2024-06-25</div><div style="left:1150px;top:14px">2024-06-25</div><div style="left:1262px;top:14px">2024-06-30</div><div style="left:1374px;top:14px">未发现问题</div><div class="lk" style="left:1484px;top:14px">详情</div></div>
<div class="tr" style="top:290px;height:49px"><div style="left:-10px;top:3px">育局部门联合</div><div style="left:100px;top:3px">邢隆教跨部门抽查计划<br>〔2024〕1号</div><div style="left:310px;top:14px;letter-spacing:-0.15px">113052578200016</div><div style="left:520px;top:14px">隆尧县卓悦艺术培训学校</div><div class="st" style="left:745px;top:14px">检查完成</div><div style="left:886px;top:14px">-</div><div style="left:1038px;top:14px">2024-06-25</div><div style="left:1150px;top:14px">2024-06-25</div><div style="left:1262px;top:14px">2024-06-30</div><div style="left:1374px;top:14px">未发现问题</div><div class="lk" style="left:1484px;top:14px">详情</div></div>
<div class="tr" style="top:339px;height:49px"><div style="left:-10px;top:3px">育局部门联合</div><div style="left:100px;top:3px">邢隆教跨部门抽查计划<br>〔2024〕1号</div><div style="left:310px;top:14px;letter-spacing:-0.15px">113052578200011</div><div style="left:520px;top:14px">隆尧县君问培训学校有限公司</div><div class="st" style="left:745px;top:14px">检查完成</div><div style="left:886px;top:14px">-</div><div style="left:1038px;top:14px">2024-06-25</div><div style="left:1150px;top:14px">2024-06-25</div><div style="left:1262px;top:14px">2024-06-30</div><div style="left:1374px;top:14px">未发现问题</div><div class="lk" style="left:1484px;top:14px">详情</div></div>
<div class="tr hl" style="top:388px;height:49px"><div style="left:-10px;top:3px">育局部门联合</div><div style="left:100px;top:3px">邢隆教跨部门抽查计划<br>〔2024〕1号</div><div style="left:310px;top:14px;letter-spacing:-0.15px">113052570000141</div><div style="left:520px;top:14px">隆尧县贵人培训学校有限公司</div><div class="st" style="left:745px;top:14px">检查完成</div><div style="left:886px;top:14px">-</div><div style="left:1038px;top:14px">2024-06-25</div><div style="left:1150px;top:14px">2024-06-25</div><div style="left:1262px;top:14px">2024-06-30</div><div style="left:1374px;top:14px">未发现问题</div><div class="lk" style="left:1484px;top:14px">详情</div></div>
<div class="tr" style="top:437px;height:70px"><div style="left:-10px;top:14px">育局部门联合</div><div style="left:100px;top:14px">邢隆教跨部门抽查计划<br>〔2024〕1号</div><div style="left:310px;top:24px;letter-spacing:-0.15px">113052578200009</div><div style="left:520px;top:14px">隆尧县小桔灯文化艺术培训中<br>心</div><div class="st" style="left:745px;top:24px">检查完成</div><div style="left:886px;top:24px">-</div><div style="left:1038px;top:24px">2024-06-25</div><div style="left:1150px;top:24px">2024-06-25</div><div style="left:1262px;top:24px">2024-06-30</div><div style="left:1374px;top:24px">未发现问题</div><div class="lk" style="left:1484px;top:24px">详情</div></div>
<div id="thead"><div style="left:100px">计划编号</div><div style="left:310px">检查对象编码</div><div style="left:520px">检查对象名称</div><div style="left:730px">检查状态</div><div style="left:870px">整改复查状态</div><div style="left:1038px">检查开始日期</div><div style="left:1150px">检查完成日期</div><div style="left:1262px">任务结束日期</div><div style="left:1374px">检查结果</div><div style="left:1483px">操作</div></div>
<div class="fx"></div>
<div id="vsb"><i></i></div>
<div id="hsb"><i></i></div>
</div>
<div id="pg">
<div class="t" style="left:22px">显示</div>
<div class="bx" style="left:62px;width:89px"><span class="abs" style="left:11px;top:0;line-height:26px;white-space:nowrap">20 条/页</span><svg class="abs" style="left:69px;top:8px" width="12" height="9" viewBox="0 0 12 9"><path d="M1 1.5 L6 7 L11 1.5" fill="none" stroke="#3370ff" stroke-width="1.2"/></svg></div>
<div class="t" style="left:162px">当前<b>1</b>/ <b>13</b>条，共<b>13</b>条</div>
<div class="abs" style="left:307px;top:0;width:110px;height:28px;border-radius:3px;background:#3370ff;color:#fff;line-height:28px;white-space:nowrap"><svg class="abs" style="left:16px;top:7px" width="15" height="15" viewBox="0 0 15 15"><path d="M11 1.2 H2 V13.8 H11" fill="none" stroke="#fff" stroke-width="1.8"/><path d="M6 8 H13 M10.5 5.2 L13.4 8 L10.5 10.8" fill="none" stroke="#fff" stroke-width="1.6"/></svg><span class="abs" style="left:38px;top:0">导出全部</span></div>
<div class="bx" style="left:1380px;width:28px"><svg class="abs" style="left:8px;top:6px" width="10" height="14" viewBox="0 0 10 14"><path d="M8 1.5 L2 7 L8 12.5" fill="none" stroke="#555" stroke-width="1.2"/></svg></div>
<div class="abs" style="left:1416px;top:0;width:28px;height:28px;border-radius:3px;background:#3370ff;color:#fff;text-align:center;line-height:28px;font-size:14px">1</div>
<div class="bx" style="left:1452px;width:28px"><svg class="abs" style="left:9px;top:6px" width="10" height="14" viewBox="0 0 10 14"><path d="M2 1.5 L8 7 L2 12.5" fill="none" stroke="#555" stroke-width="1.2"/></svg></div>
<div class="t" style="left:1496px">跳至</div>
<div class="bx" style="left:1536px;width:50px"></div>
<div class="t" style="left:1598px">页</div>
</div>

</div>
</div>
<div id="taskbar">
<div class="abs" style="left:0;top:0;width:1920px;height:39px;background:linear-gradient(180deg,rgba(255,255,255,.22) 0%,rgba(255,255,255,.05) 30%,rgba(0,0,0,0) 55%,rgba(0,0,20,.12) 100%)"></div>
<div class="abs" style="left:1292px;top:0;width:70px;height:39px;background:linear-gradient(90deg,rgba(255,255,255,0),rgba(255,255,255,.22),rgba(255,255,255,0));transform:skewX(28deg)"></div>
<!-- start orb -->
<svg class="abs" style="left:7px;top:0" width="40" height="40" viewBox="0 0 40 40"><defs><radialGradient id="orb" cx="50%" cy="100%" r="85%"><stop offset="0" stop-color="#1fd4fb"/><stop offset=".28" stop-color="#1288cc"/><stop offset=".6" stop-color="#0d4f8f"/><stop offset="1" stop-color="#2b6799"/></radialGradient><linearGradient id="orbg" x1="0" y1="0" x2="0" y2="1"><stop offset="0" stop-color="#fff" stop-opacity=".62"/><stop offset="1" stop-color="#fff" stop-opacity=".18"/></linearGradient><linearGradient id="fr" x1="0" y1="0" x2="1" y2="1"><stop offset="0" stop-color="#e8441f"/><stop offset="1" stop-color="#f7a21c"/></linearGradient><linearGradient id="fg" x1="0" y1="1" x2="1" y2="0"><stop offset="0" stop-color="#b9d86a"/><stop offset="1" stop-color="#4c9f2c"/></linearGradient><linearGradient id="fb" x1="0" y1="1" x2="1" y2="0"><stop offset="0" stop-color="#1677c8"/><stop offset="1" stop-color="#8ec8ee"/></linearGradient><linearGradient id="fy" x1="0" y1="0" x2="1" y2="1"><stop offset="0" stop-color="#fbd54a"/><stop offset="1" stop-color="#f79a16"/></linearGradient></defs><circle cx="20" cy="20" r="18.4" fill="url(#orb)" stroke="#0c355f" stroke-width="1"/><circle cx="20" cy="20" r="17.4" fill="none" stroke="#d6e8f4" stroke-opacity=".75" stroke-width=".9"/><path d="M3.2 19 A16.8 16.8 0 0 1 36.8 19 C30 22.6 10 22.6 3.2 19 Z" fill="url(#orbg)"/><path d="M12.2 10.4 C15.2 8.8 18.2 9 21 10.6 L19.4 18 C16.8 16.4 13.8 16.4 10.6 18.2 Z" fill="url(#fr)"/><path d="M22.4 11.6 C25.4 13.2 28.6 13 32 11 L30.2 18.6 C27 20.6 23.8 20.8 20.8 19.4 Z" fill="url(#fg)"/><path d="M10.2 19.8 C13.4 18 16.4 18.2 19 19.6 L17.4 27.4 C14.8 25.8 11.8 25.8 8.4 27.8 Z" fill="url(#fb)"/><path d="M20.4 21 C23.4 22.4 26.6 22.2 29.8 20.4 L28 28 C24.8 30 21.6 30.2 18.6 28.8 Z" fill="url(#fy)"/></svg>
<!-- explorer -->
<div class="tbn" style="left:59px;width:159px"><svg class="abs" style="left:9px;top:2px" width="26" height="33" viewBox="0 0 26 33"><defs><linearGradient id="fo1" x1="0" y1="0" x2="1" y2="0"><stop offset="0" stop-color="#f6e7a4"/><stop offset="1" stop-color="#e7c95e"/></linearGradient></defs><path d="M8.4 5 L20.6 3 V27 L8.4 31 Z" fill="#e9cf74"/><path d="M10 5.6 L21.6 3.6 V26 L10 30 Z" fill="url(#fo1)"/><path d="M1.4 1.4 L4.4 2 L8.6 5.6 V24 L6.4 32 L3.4 27.4 L1.4 27.6 Z" fill="#f7e6a0"/><path d="M4.4 2 L8.6 5.6 V24 L6.4 32 Z" fill="#f1dc8a"/><path d="M1.4 1.4 L4.4 2 V27.6 L6.4 32 L3.4 27.4 L1.4 27.6 Z" fill="#fbf0bd"/><path d="M19 24 L22.6 21.6 V28 L19 29.6 Z" fill="#e8cf70"/><rect x="20.4" y="23" width="1.1" height="5" fill="#fff"/></svg><span style="left:45px;font-size:13px">C:\Users\Admini...</span></div>
<!-- 360 -->
<div class="tbn act" style="left:221px;width:159px"><svg class="abs" style="left:9px;top:2px" width="32" height="34" viewBox="0 0 32 34"><ellipse cx="16.6" cy="18.6" rx="14.2" ry="14.6" fill="#fff"/><path d="M6.6 19.6 A9.6 9.6 0 1 1 25.6 21 H11.4" fill="none" stroke="#58c322" stroke-width="4.4"/><path d="M6.7 19.8 A9.6 9.6 0 0 0 24.6 25.4" fill="none" stroke="#58c322" stroke-width="4.4"/><path d="M4.6 31 C3 20 10.6 7.6 27.8 2.4 C19 7 9.6 16 7.6 30.4 Z" fill="#58c322"/><path d="M27.8 2.4 C29 3.6 29 5.6 27.6 7.6 C27.6 5.6 25.6 5 23 5.2 Z" fill="#58c322"/></svg><span style="left:45px">检查结果查询 - ...</span></div>
<!-- wechat -->
<div class="tbn" style="left:383px;width:159px"><svg class="abs" style="left:8px;top:5px" width="34" height="30" viewBox="0 0 34 30"><ellipse cx="12.4" cy="10.4" rx="11.4" ry="9.6" fill="#28c445"/><path d="M5.4 17 L3.6 21.6 L9.4 19.4 Z" fill="#28c445"/><ellipse cx="8.8" cy="7.4" rx="1.5" ry="1.6" fill="#147a2c"/><ellipse cx="16.4" cy="7.4" rx="1.5" ry="1.6" fill="#147a2c"/><ellipse cx="23.6" cy="18.4" rx="9.6" ry="8.2" fill="#ededed"/><path d="M27 25 L29.6 28.6 L23.6 26.6 Z" fill="#ededed"/><circle cx="20.4" cy="16" r="1.2" fill="#8a8a8a"/><circle cx="26.8" cy="16" r="1.2" fill="#8a8a8a"/></svg><span style="left:45px">微信</span></div>
<!-- wps -->
<div class="tbn" style="left:545px;width:159px"><svg class="abs" style="left:7px;top:8px" width="34" height="24" viewBox="0 0 34 24"><defs><linearGradient id="wp" x1="0" y1="0" x2="0" y2="1"><stop offset="0" stop-color="#ff1c1c"/><stop offset="1" stop-color="#ff4d12"/></linearGradient><linearGradient id="wp2" x1="0" y1="0" x2="0" y2="1"><stop offset="0" stop-color="#ff8a1c"/><stop offset=".5" stop-color="#ff3a14"/><stop offset="1" stop-color="#ff4d12"/></linearGradient></defs><g fill="none" stroke-width="3.6" stroke-linejoin="round" stroke-linecap="round"><path d="M13.6 5.6 L14 3.2 H2.6 L11.2 20.8" stroke="url(#wp)"/><path d="M22.4 3.2 H30.6 L22 20.8 L19 13.2" stroke="url(#wp)"/><path d="M11.2 20.8 L20.6 3.2" stroke="url(#wp2)"/></g></svg><span style="left:45px">抽查结果<span style="position:static;font-size:13px">1.doc - ...</span></span></div>
<!-- tray -->
<svg class="abs" style="left:1662px;top:12px" width="16" height="16" viewBox="0 0 16 16"><circle cx="8" cy="8" r="7.6" fill="#4fc22c"/><circle cx="8" cy="8" r="7.6" fill="none" stroke="#e8f8d8" stroke-width="1"/><path d="M4.4 8.6 A3.8 3.8 0 1 1 11.8 9 H6" fill="none" stroke="#fff" stroke-width="1.7"/><path d="M4.4 8.8 A3.8 3.8 0 0 0 11 11" fill="none" stroke="#fff" stroke-width="1.7"/></svg>
<svg class="abs" style="left:1709px;top:12px" width="17" height="17" viewBox="0 0 17 17"><rect x="0" y="0" width="17" height="17" rx="3" fill="#fff"/><path d="M3 4.4 A2 2 0 0 1 5 2.6 H12 A2 2 0 0 1 14 4.6 V9 A2 2 0 0 1 12 11 H7.4 L4.8 13 V11 A2 2 0 0 1 3 9 Z" fill="none" stroke="#2a78e4" stroke-width="1.3"/><circle cx="12.4" cy="12" r="2.8" fill="#f0383e"/></svg>
<svg class="abs" style="left:1733px;top:12px" width="18" height="17" viewBox="0 0 18 17"><circle cx="8" cy="9" r="7.6" fill="#f2c21a"/><path d="M2 6 A7.6 7.6 0 0 1 14.6 5" fill="none" stroke="#3aa83a" stroke-width="2.2"/><circle cx="8.4" cy="9" r="3.6" fill="#2c9a36"/><path d="M8.4 6.8 V11.2 M6.2 9 H10.6" stroke="#fff" stroke-width="1.5"/><circle cx="14.6" cy="12.6" r="2" fill="#2c9a36"/></svg>
<svg class="abs" style="left:1757px;top:11px" width="17" height="18" viewBox="0 0 17 18"><rect x="0.5" y="0.5" width="16" height="16" rx="2" fill="#2c86d8" stroke="#bfe0f8" stroke-width="1"/><path d="M3 4 H7 M3 7 H7 M5 3 V8 M9.6 3.4 L13.6 7.6 M13.6 3.4 L9.6 7.6 M3 11 H8 M5.4 9.6 V13.6 M10 10.4 H14 V13.6 H10 Z" fill="none" stroke="#fff" stroke-width="1"/><path d="M3 17.4 L14 15.8" stroke="#f2c04a" stroke-width="1.4"/></svg>
<svg class="abs" style="left:1782px;top:12px" width="18" height="18" viewBox="0 0 18 18"><path d="M1 6.4 H4.2 L9 2 V16 L4.2 11.6 H1 Z" fill="#e8e8e8" stroke="#fff" stroke-width=".6"/><circle cx="12.8" cy="12.6" r="4" fill="#e8262c"/><path d="M11 10.8 L14.6 14.4 M14.6 10.8 L11 14.4" stroke="#fff" stroke-width="1.3"/></svg>
<svg class="abs" style="left:1806px;top:11px" width="18" height="18" viewBox="0 0 18 18"><rect x="5.4" y="4.6" width="11" height="9" fill="#1a2a3a" stroke="#fff" stroke-width="1.3"/><rect x="8.4" y="14" width="5" height="1.6" fill="#fff"/><rect x="6.6" y="15.6" width="8.6" height="1.2" fill="#fff"/><rect x="1" y="2" width="4.4" height="6" fill="#fff"/><path d="M3.2 8 V12 H5.4" fill="none" stroke="#fff" stroke-width="1.1"/></svg>
<div class="ck">9:33<br>2024/7/19</div>
<div class="abs" style="left:1905px;top:1px;width:15px;height:39px;border-left:1px solid rgba(10,20,40,.8);box-shadow:inset 1px 0 0 rgba(255,255,255,.45),inset 0 1px 0 rgba(255,255,255,.4);background:linear-gradient(180deg,rgba(255,255,255,.38),rgba(255,255,255,.12) 50%,rgba(255,255,255,.05))"></div>
</div>
</body>
</html>
